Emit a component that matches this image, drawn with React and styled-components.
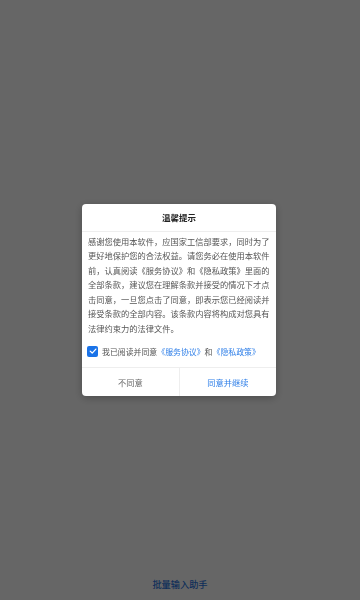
import styled, { createGlobalStyle } from "styled-components";
import { useState } from "react";

const GlobalStyle = createGlobalStyle`
  html, body {
    margin: 0;
    padding: 0;
    background: #fff;
    font-family: "Noto Sans CJK SC", "Noto Sans", sans-serif;
  }
`;

//Styled Components
const Page = styled.div`
  min-height: 100vh;
  display: flex;
  flex-direction: column;
  justify-content: flex-end;
  align-items: center;
  padding-bottom: 9px;
  box-sizing: border-box;
`;

const Footer = styled.div`
  font-size: 9.2px;
  font-weight: 500;
  color: #2b74e0;
  line-height: 14px;
`;

const Overlay = styled.div`
  position: fixed;
  inset: 0;
  background: rgba(0, 0, 0, 0.6);
  display: flex;
  align-items: center;
  justify-content: center;
`;

const Dialog = styled.div`
  width: 194px;
  background: #fff;
  border-radius: 4px;
  box-shadow: 0 2px 8px rgba(0, 0, 0, 0.25);
  overflow: hidden;
  margin-left: -2px;
`;

const Header = styled.div`
  height: 27px;
  display: flex;
  align-items: center;
  justify-content: center;
  font-size: 8.5px;
  font-weight: 700;
  color: #222;
  border-bottom: 1px solid #eeeeee;
`;

const Body = styled.div`
  padding: 2px 6px 8px;
`;

const Text = styled.p`
  margin: 0;
  font-size: 8.25px;
  line-height: 14.5px;
  color: #555;
`;

const CheckRow = styled.label`
  display: flex;
  align-items: center;
  gap: 4px;
  margin: 8px 0 0 -1px;
  height: 16px;
  font-size: 7.9px;
  color: #555;
  cursor: pointer;
`;

const Box = styled.span`
  width: 11px;
  height: 11px;
  border-radius: 2px;
  flex-shrink: 0;
  display: flex;
  align-items: center;
  justify-content: center;
  background: ${(p) => (p.checked ? "#1a73e8" : "#fff")};
  border: ${(p) => (p.checked ? "none" : "1px solid #aaa")};
  box-sizing: border-box;
`;

const Link = styled.span`
  color: #2f7fe8;
`;

const Actions = styled.div`
  display: flex;
  height: 28px;
  border-top: 1px solid #eeeeee;
`;

const Action = styled.button`
  flex: 1;
  border: none;
  background: none;
  outline: none;
  padding: 0;
  font-family: inherit;
  font-size: 8.25px;
  color: ${(p) => (p.primary ? "#2f7fe8" : "#666")};
  & + & {
    border-left: 1px solid #eeeeee;
  }
`;

export default function App() {
  const [agreed, setAgreed] = useState(true);

  return (
    <>
      <GlobalStyle />
      <Page>
        <Footer>批量输入助手</Footer>
      </Page>
      <Overlay>
        <Dialog>
          <Header>温馨提示</Header>
          <Body>
            <Text>
              感谢您使用本软件，应国家工信部要求，同时为了更好地保护您的合法权益。请您务必在使用本软件前，认真阅读《服务协议》和《隐私政策》里面的全部条款，建议您在理解条款并接受的情况下才点击同意，一旦您点击了同意，即表示您已经阅读并接受条款的全部内容。该条款内容将构成对您具有法律约束力的法律文件。
            </Text>
            <CheckRow onClick={() => setAgreed(!agreed)}>
              <Box checked={agreed}>
                {agreed && (
                  <svg width="8" height="8" viewBox="0 0 10 10">
                    <path
                      d="M1.5 5.2 L4 7.6 L8.6 2.6"
                      fill="none"
                      stroke="#fff"
                      strokeWidth="1.6"
                      strokeLinecap="round"
                      strokeLinejoin="round"
                    />
                  </svg>
                )}
              </Box>
              <span>
                我已阅读并同意<Link>《服务协议》</Link>和<Link>《隐私政策》</Link>
              </span>
            </CheckRow>
          </Body>
          <Actions>
            <Action>不同意</Action>
            <Action primary>同意并继续</Action>
          </Actions>
        </Dialog>
      </Overlay>
    </>
  );
}
